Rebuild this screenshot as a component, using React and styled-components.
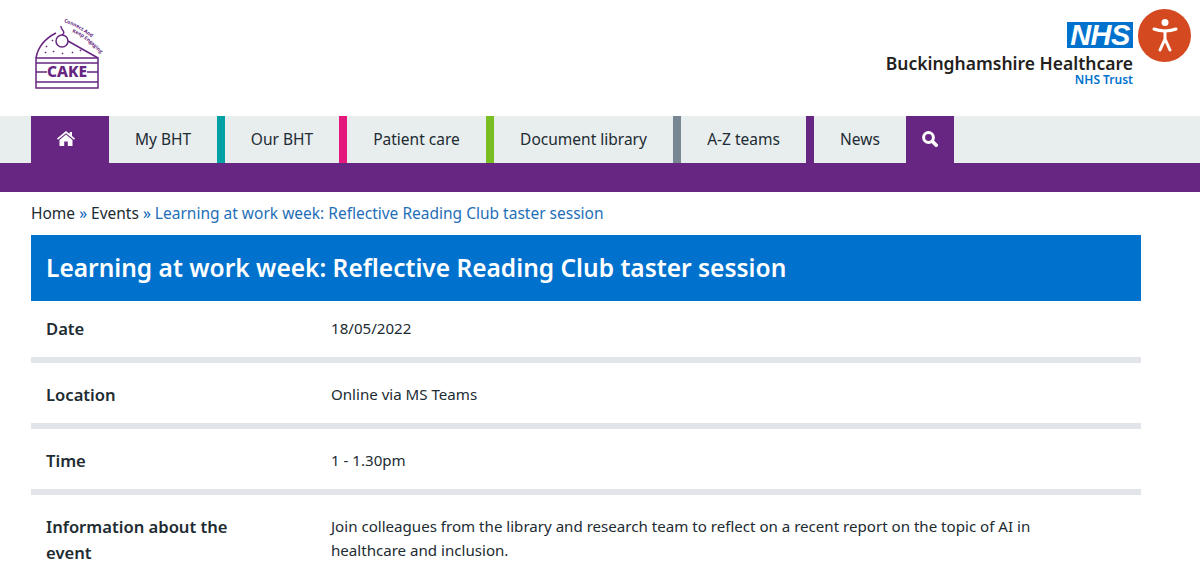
import React from "react";
import styled, { createGlobalStyle } from "styled-components";

const GlobalStyle = createGlobalStyle`
    html, body { margin: 0; padding: 0; background: #fff; overflow: hidden; }
    body { font-family: "Noto Sans", "Open Sans", Arial, sans-serif; color: #212b32; }
    * { box-sizing: border-box; }
`
const Page = styled.div`
    position: relative;
    width: 1200px;
    height: 563px;
    overflow: hidden;
`
const Header = styled.header`
    height: 116px;
    padding: 0 67px 0 31px;
    display: flex;
    justify-content: space-between;
`
const CakeLogo = styled.svg`
    width: 80px;
    height: 80px;
    margin-top: 16px;
`
const TrustLogo = styled.div`
    padding-top: 22px;
    display: flex;
    flex-direction: column;
    align-items: flex-end;
`
const NhsBadge = styled.div`
    width: 66px;
    height: 26px;
    background: #0072ce;
    color: #fff;
    font: italic 700 29px/26px "Liberation Sans", Arial, sans-serif;
    letter-spacing: -0.5px;
    text-align: center;
`
const TrustName = styled.div`
    margin-top: 5px;
    font-size: 17.5px;
    line-height: 20px;
    font-weight: 600;
    color: #231f20;
    white-space: nowrap;
`
const TrustSub = styled.div`
    font-size: 12px;
    line-height: 14px;
    font-weight: 600;
    color: #0072ce;
`
const AccessButton = styled.div`
    position: absolute;
    top: 9px;
    right: 9px;
    width: 53px;
    height: 53px;
    border-radius: 50%;
    background: #d4491f;
    display: flex;
    align-items: center;
    justify-content: center;
`
const NavBar = styled.nav`
    height: 47px;
    padding-left: 31px;
    background: #e8edee;
    display: flex;
`
const NavItem = styled.a`
    width: ${(props) => props.$width}px;
    padding-bottom: 2px;
    display: flex;
    align-items: center;
    justify-content: center;
    font-size: 15.5px;
    color: #212b32;
    border-right: ${(props) => (props.$accent ? `8px solid ${props.$accent}` : "none")};
`
const NavIcon = styled.a`
    width: ${(props) => props.$width}px;
    padding-right: ${(props) => props.$inset || 0}px;
    padding-bottom: 2px;
    background: #662681;
    display: flex;
    align-items: center;
    justify-content: center;
`
const PurpleBand = styled.div`
    height: 29px;
    background: #662681;
`
const Main = styled.main`
    width: 1110px;
    margin-left: 31px;
`
const Breadcrumb = styled.div`
    height: 43px;
    padding-top: 10px;
    font-size: 15.5px;
    line-height: 22px;
    color: #212b32;
`
const Sep = styled.span`
    color: #005eb8;
`
const Current = styled.span`
    color: #1f6fb8;
`
const Title = styled.h1`
    margin: 0;
    height: 66px;
    padding: 0 15px;
    background: #0072ce;
    color: #fff;
    font-size: 24.5px;
    font-weight: 600;
    line-height: 65px;
`
const Row = styled.div`
    display: grid;
    grid-template-columns: 285px 1fr;
    padding: 15px 15px 15px;
    border-bottom: 6px solid #e1e4e8;
    & + & { padding-top: 19px; }
    &:last-child { border-bottom: none; }
`
const Label = styled.div`
    padding-right: 60px;
    font-size: 16.6px;
    font-weight: 600;
    line-height: 26px;
    color: #212b32;
`
const Value = styled.div`
    padding-right: 90px;
    font-size: 15.1px;
    line-height: 24px;
    color: #212b32;
`

const navItems = [
    { label: "My BHT", width: 116, accent: "#00a0a5" },
    { label: "Our BHT", width: 122, accent: "#e5197b" },
    { label: "Patient care", width: 147, accent: "#78be20" },
    { label: "Document library", width: 187, accent: "#768692" },
    { label: "A-Z teams", width: 133, accent: "#662681" },
    { label: "News", width: 92 },
];

const rows = [
    { label: "Date", value: "18/05/2022" },
    { label: "Location", value: "Online via MS Teams" },
    { label: "Time", value: "1 - 1.30pm" },
    {
        label: "Information about the event",
        value: "Join colleagues from the library and research team to reflect on a recent report on the topic of AI in healthcare and inclusion.",
    },
];

// viewBox uses page coordinates, so the drawing lines up with the screenshot
function Cake() {
    const purple = "#662681";
    return (
        <CakeLogo viewBox="31 16 80 80" fill="none" stroke={purple} strokeWidth="1.5">
            <path d="M36 58 C38 47 46 38 56 33 M68 41 L98 58" />
            <path d="M36 58 H98 V88 H36 Z M36 63 H98 M36 82 H98" />
            <path d="M36 72 H47 M87 72 H98" />
            <circle cx="62" cy="41" r="6" />
            <path d="M62 35 C67 32 60 29 61 26" />
            <path d="M46 46 l1 1 M52 40 l1 1 M45 52 l1 1 M53 51 l1 1 M62 53 l1 1 M72 52 l1 1 M80 50 l1 1" strokeWidth="1.6" />
            <text x="67" y="77" textAnchor="middle" fontFamily="Noto Sans, Arial, sans-serif" fontWeight="800" fontSize="15.5" fill={purple} stroke="none">CAKE</text>
            <path id="cake-arc-a" d="M64 22 Q80 27 102 46" stroke="none" />
            <path id="cake-arc-b" d="M72 32 Q88 38 108 62" stroke="none" />
            <text fontFamily="Open Sans, Arial, sans-serif" fontWeight="700" fontSize="5" fill={purple} stroke="none">
                <textPath href="#cake-arc-a">Connect And</textPath>
            </text>
            <text fontFamily="Open Sans, Arial, sans-serif" fontWeight="700" fontSize="5" fill={purple} stroke="none">
                <textPath href="#cake-arc-b">Keep Engaging</textPath>
            </text>
        </CakeLogo>
    );
}

function HomeIcon() {
    return (
        <svg width="18" height="15" viewBox="0 0 18 15" fill="#fff">
            <path d="M9 0 L12.6 3 V1 H15 V5 L18 7.6 L17 8.8 L9 2.2 L1 8.8 L0 7.6 Z" />
            <path d="M9 3.6 L15.5 9 V15 H10.8 V10.6 H7.2 V15 H2.5 V9 Z" />
        </svg>
    );
}

function SearchIcon() {
    return (
        <svg width="16" height="16" viewBox="0 0 16 16" fill="none" stroke="#fff">
            <circle cx="6.5" cy="6.5" r="4.9" strokeWidth="3" />
            <path d="M10.5 10.5 L14.2 14.2" strokeWidth="3.6" strokeLinecap="round" />
        </svg>
    );
}

function PersonIcon() {
    return (
        <svg width="26" height="33" viewBox="0 0 26 33" fill="none" stroke="#fff" strokeWidth="3" strokeLinecap="round" strokeLinejoin="round">
            <circle cx="13" cy="3.6" r="3.5" fill="#fff" stroke="none" />
            <path d="M2 10 C8 12.5 18 12.5 24 10" />
            <path d="M13 12 V20 L8 31 M13 20 L18 31" />
        </svg>
    );
}

export default function App() {
    return (
        <Page>
            <GlobalStyle />
            <Header>
                <Cake />
                <TrustLogo>
                    <NhsBadge>NHS</NhsBadge>
                    <TrustName>Buckinghamshire Healthcare</TrustName>
                    <TrustSub>NHS Trust</TrustSub>
                </TrustLogo>
            </Header>
            <AccessButton><PersonIcon /></AccessButton>
            <NavBar>
                <NavIcon $width={78} $inset={8}><HomeIcon /></NavIcon>
                {navItems.map((item) => (
                    <NavItem key={item.label} $width={item.width} $accent={item.accent}>
                        {item.label}
                    </NavItem>
                ))}
                <NavIcon $width={48}><SearchIcon /></NavIcon>
            </NavBar>
            <PurpleBand />
            <Main>
                <Breadcrumb>
                    Home <Sep>»</Sep> Events <Sep>»</Sep> <Current>Learning at work week: Reflective Reading Club taster session</Current>
                </Breadcrumb>
                <Title>Learning at work week: Reflective Reading Club taster session</Title>
                {rows.map((row) => (
                    <Row key={row.label}>
                        <Label>{row.label}</Label>
                        <Value>{row.value}</Value>
                    </Row>
                ))}
            </Main>
        </Page>
    );
}
